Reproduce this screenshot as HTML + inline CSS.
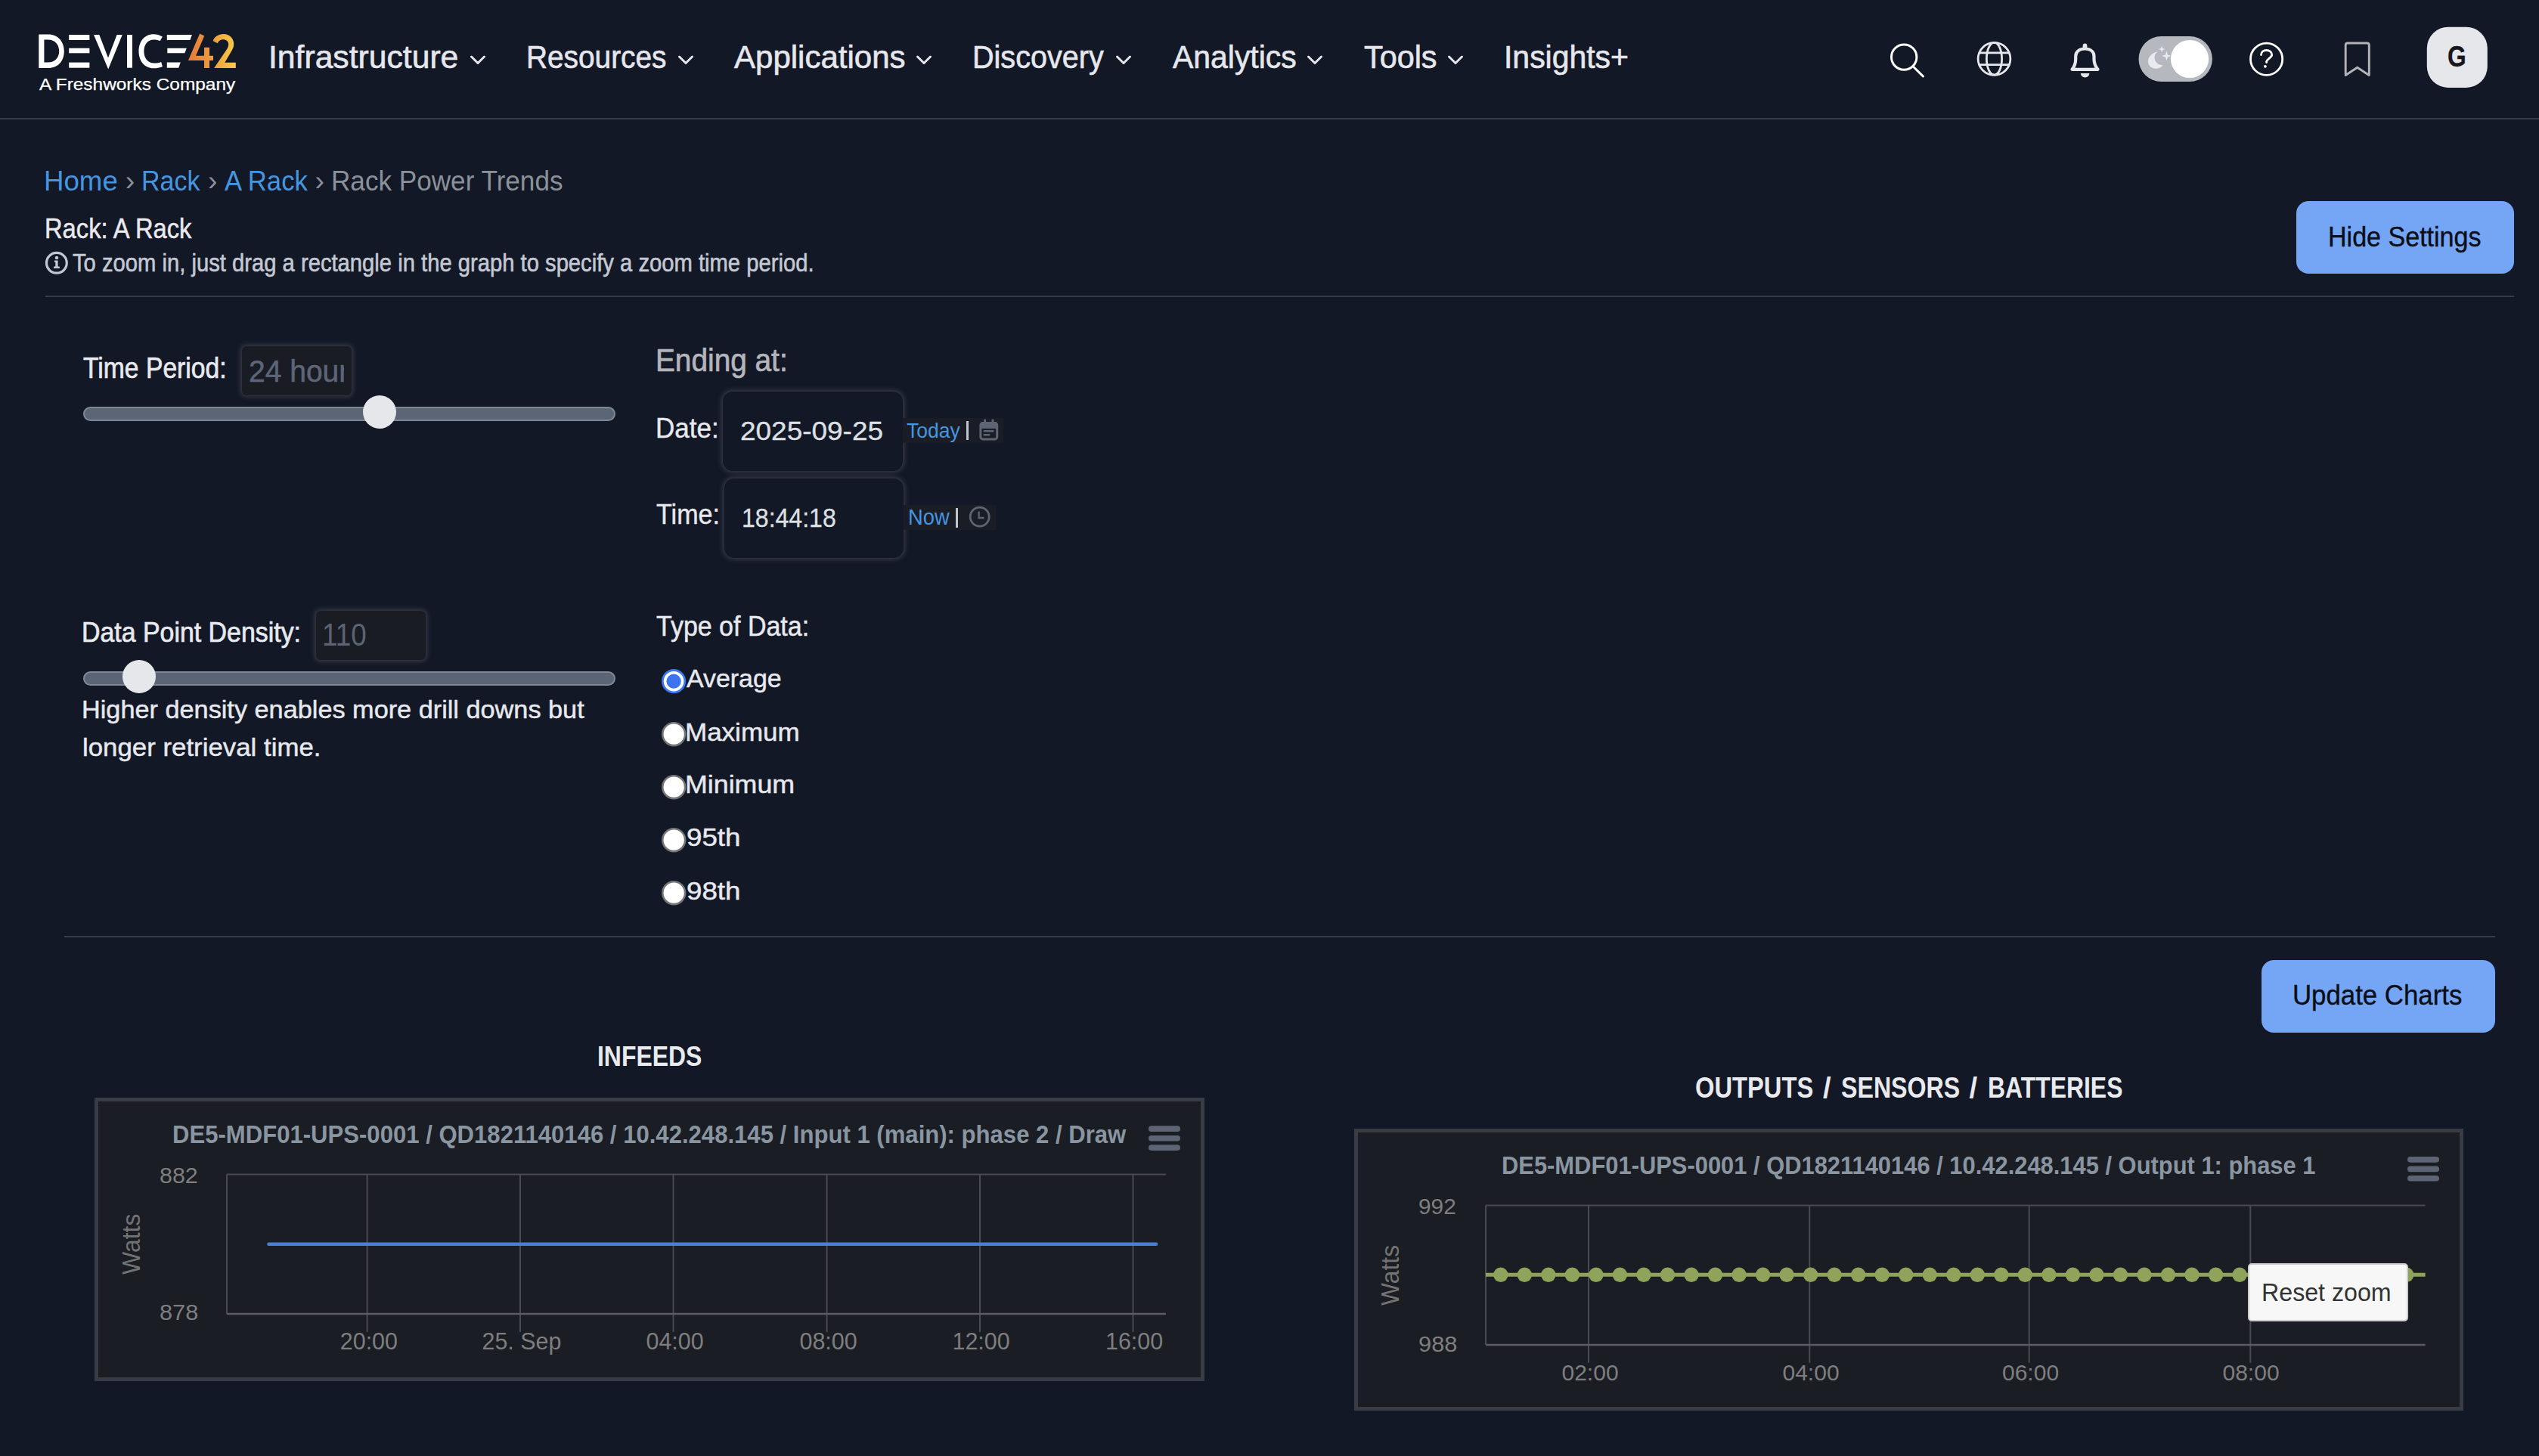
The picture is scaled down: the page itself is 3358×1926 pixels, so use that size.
<!DOCTYPE html>
<html><head><meta charset="utf-8"><title>Rack Power Trends</title>
<style>
html,body{margin:0;padding:0;}
body{width:3358px;height:1926px;overflow:hidden;background:#131826;position:relative;font-family:'Liberation Sans',sans-serif;}
.t{position:absolute;white-space:pre;transform-origin:0 0;}
.a{position:absolute;box-sizing:border-box;}
svg{position:absolute;overflow:visible;}
</style></head><body>

<div class=a style="left:0px;top:156px;width:3358px;height:2px;background:#393c48;"></div>
<svg style="left:0;top:0" width="340" height="140" viewBox="0 0 340 140">
<defs><linearGradient id="lg" x1="248" y1="0" x2="312" y2="0" gradientUnits="userSpaceOnUse">
<stop offset="0" stop-color="#e3783a"/><stop offset="0.5" stop-color="#ee9c3e"/><stop offset="1" stop-color="#f7cd45"/></linearGradient></defs>
<path fill="#fff" fill-rule="evenodd" d="M51.3,45.4 H63.5 C77.5,45.4 84.8,55.5 84.8,67.7 C84.8,80 77.5,90 63.5,90 H51.3 Z M58.4,52.5 V82.6 H63.5 C73,82.6 78.2,76 78.2,67.7 C78.2,59.3 73,52.5 63.5,52.5 Z"/>
<rect fill="#fff" x="91.2" y="46" width="27.2" height="7"/>
<rect fill="#fff" x="91.2" y="63.7" width="27.2" height="6.6"/>
<rect fill="#fff" x="91.2" y="82.6" width="27.2" height="7.1"/>
<path fill="#fff" d="M124,46 H131.3 L143,76.5 L154.6,46 H161.8 L143.2,91.5 Z"/>
<rect fill="#fff" x="168" y="46" width="7" height="43.7"/>
<path fill="#fff" d="M214.9,48.6 C211,46.3 207.5,45.2 203,45.2 C191,45.2 183.5,55 183.5,67.8 C183.5,80.5 191,90.3 203,90.3 C207.5,90.3 211.5,89.3 214.9,88.2 L213.2,82 C210.5,83 207.5,83.5 204,83.5 C195,83.5 190.4,76.5 190.4,67.8 C190.4,59 195,52.4 203.5,52.4 C206.5,52.4 209.5,53 211.8,54.1 Z"/>
<path fill="#fff" d="M220.8,46 H253.9 L251.4,53 H220.8 Z"/>
<path fill="#fff" d="M221.3,63.7 H246.8 L244.3,70.3 H221.3 Z"/>
<path fill="#fff" d="M220.8,82.6 H238.8 L236.2,89.7 H220.8 Z"/>
<path fill="url(#lg)" d="M264.2,44.5 L270.2,47.4 L259,73.7 H270 V62.7 H277 V73.7 H282 V79.9 H277 V90 H270 V79.9 H248.9 Z"/>
<path fill="url(#lg)" d="M281.6,54 C283.5,48.5 289,45 295.5,45 C303.5,45 309.2,50.5 309.2,58.3 C309.2,61.5 308.3,64 306.5,67 L297.3,82.8 H311.8 V90 H283.2 L299.8,65.5 C301.5,63 302.2,61 302.2,58.5 C302.2,54.5 299.2,52.2 295,52.2 C291.8,52.2 289.3,54 287.6,57.2 Z"/>
</svg>
<svg style="left:621.8px;top:72px" width="22" height="16"><polyline points="1.5,3 10,11.5 18.5,3" fill="none" stroke="#e6e7ec" stroke-width="3" stroke-linecap="round" stroke-linejoin="round"/></svg>
<svg style="left:896.5px;top:72px" width="22" height="16"><polyline points="1.5,3 10,11.5 18.5,3" fill="none" stroke="#e6e7ec" stroke-width="3" stroke-linecap="round" stroke-linejoin="round"/></svg>
<svg style="left:1212px;top:72px" width="22" height="16"><polyline points="1.5,3 10,11.5 18.5,3" fill="none" stroke="#e6e7ec" stroke-width="3" stroke-linecap="round" stroke-linejoin="round"/></svg>
<svg style="left:1476.3px;top:72px" width="22" height="16"><polyline points="1.5,3 10,11.5 18.5,3" fill="none" stroke="#e6e7ec" stroke-width="3" stroke-linecap="round" stroke-linejoin="round"/></svg>
<svg style="left:1728.8px;top:72px" width="22" height="16"><polyline points="1.5,3 10,11.5 18.5,3" fill="none" stroke="#e6e7ec" stroke-width="3" stroke-linecap="round" stroke-linejoin="round"/></svg>
<svg style="left:1915px;top:72px" width="22" height="16"><polyline points="1.5,3 10,11.5 18.5,3" fill="none" stroke="#e6e7ec" stroke-width="3" stroke-linecap="round" stroke-linejoin="round"/></svg>
<svg style="left:0;top:0" width="3358" height="140">
<circle cx="2518.2" cy="75.6" r="16.7" fill="none" stroke="#fff" stroke-width="3"/>
<line x1="2530.8" y1="88.5" x2="2543.5" y2="101" stroke="#fff" stroke-width="3" stroke-linecap="round"/>
<g fill="none" stroke="#e6e7eb" stroke-width="2.8">
<circle cx="2637.5" cy="77.8" r="21.4"/>
<ellipse cx="2637.5" cy="77.8" rx="10.1" ry="21.4"/>
<line x1="2617" y1="69.9" x2="2658" y2="69.9"/>
<line x1="2617" y1="85.6" x2="2658" y2="85.6"/>
</g>
<path fill="none" stroke="#e6e7eb" stroke-width="4.2" stroke-linejoin="round" d="M2740.5,91.8 C2744,87.5 2745.2,84 2745.2,78 V74.5 C2745.2,68.5 2750,64.5 2757.4,64.5 C2764.8,64.5 2769.5,68.5 2769.5,74.5 V78 C2769.5,84 2771,87.5 2774.5,91.8 Z"/>
<rect x="2754.6" y="57.6" width="5.8" height="6.5" rx="2.9" fill="#e6e7eb"/>
<path fill="#e6e7eb" d="M2751.8,97 H2763.4 C2763.4,100 2760.8,102.4 2757.6,102.4 C2754.4,102.4 2751.8,100 2751.8,97 Z"/>
<rect x="2828.5" y="48" width="97.4" height="60" rx="30" fill="#b5b8bf"/>
<circle cx="2896" cy="78" r="25.1" fill="#fff"/>
<path fill="#e9eaed" d="M2854,68.3 C2846,69.5 2841,75.5 2841,81.5 C2841,87 2845.5,90.8 2851.5,90.8 C2855.5,90.8 2858.5,89 2860.6,86.2 C2854,86.5 2849.5,81.5 2849.5,76 C2849.5,72.5 2851,70 2854,68.3 Z"/>
<path fill="#e9eaed" d="M2859.1,60.5 L2860.2,63.9 L2863.6,65 L2860.2,66.1 L2859.1,69.5 L2858,66.1 L2854.6,65 L2858,63.9 Z"/>
<path fill="#e9eaed" d="M2865.4,67.5 L2866.9,72.4 L2871.8,73.9 L2866.9,75.4 L2865.4,80.3 L2863.9,75.4 L2859,73.9 L2863.9,72.4 Z"/>
<circle cx="2997.6" cy="78.2" r="21.1" fill="none" stroke="#fff" stroke-width="2.8"/>
<path fill="none" stroke="#fff" stroke-width="2.8" stroke-linecap="round" d="M2990.5,72.5 C2990.5,68.5 2993.5,66.5 2997.5,66.5 C3001.5,66.5 3004.7,69 3004.7,72.5 C3004.7,76.5 2998.5,77.5 2997.6,81.5 V82.5"/>
<circle cx="2995.9" cy="87.8" r="1.9" fill="#fff"/>
<path fill="none" stroke="#b3b4b8" stroke-width="2.9" stroke-linejoin="round" d="M3102.2,99.5 V59.5 C3102.2,57.8 3103.5,57 3105,57 H3130.5 C3132,57 3133.3,57.8 3133.3,59.5 V99.5 L3117.7,89.2 Z"/>
<rect x="3209.8" y="35.7" width="80" height="80.3" rx="28" fill="#e6e7eb"/>
</svg>
<div class=a style="left:3037px;top:266px;width:288px;height:96px;background:#74a6f5;border-radius:16px;"></div>
<div class=a style="left:60px;top:391px;width:3265px;height:2px;background:#393c48;"></div>
<svg style="left:0;top:0" width="200" height="400">
<circle cx="74.9" cy="347.8" r="13.4" fill="none" stroke="#c3c8d2" stroke-width="3.2"/>
<circle cx="75" cy="341" r="2.3" fill="#c3c8d2"/>
<path fill="#c3c8d2" d="M72,344.5 H76.6 V352.5 H78.8 V355 H71 V352.5 H73.3 V347 H72 Z"/>
</svg>
<div class=a style="left:320px;top:458px;width:145px;height:65px;background:#1a1c24;border-radius:6px;box-shadow:0 0 6px 2px rgb(58,61,72);"></div>
<div class=a style="left:418px;top:808px;width:145px;height:65px;background:#1a1c24;border-radius:6px;box-shadow:0 0 6px 2px rgb(58,61,72);"></div>
<div class=a style="left:956px;top:518px;width:238px;height:105px;background:#131826;border-radius:13px;box-shadow:0 0 6px 2px rgb(58,61,72);"></div>
<div class=a style="left:958px;top:633px;width:237px;height:105px;background:#131826;border-radius:13px;box-shadow:0 0 6px 2px rgb(58,61,72);"></div>
<div class=a style="left:1194px;top:553px;width:133px;height:33px;background:#1a1d26;"></div>
<div class=a style="left:1195px;top:668px;width:122px;height:33px;background:#1a1d26;"></div>
<div class=a style="left:1278px;top:557px;width:3px;height:25px;background:#c0c4cc;"></div>
<div class=a style="left:1264.3px;top:672px;width:2.7000000000000455px;height:25.5px;background:#c0c4cc;"></div>
<svg style="left:0;top:0" width="1400" height="800">
<g fill="none" stroke="#5d6574" stroke-width="3">
<rect x="1296.9" y="559.5" width="21.8" height="21.4" rx="3"/>
<line x1="1302.5" y1="554.6" x2="1302.5" y2="560"/>
<line x1="1313" y1="554.6" x2="1313" y2="560"/>
<line x1="1298" y1="565.4" x2="1318" y2="565.4"/>
</g>
<rect x="1297" y="558" width="21.8" height="8" rx="2" fill="#5d6574"/>
<rect x="1300.5" y="569" width="14" height="2.4" rx="1.2" fill="#5d6574"/>
<rect x="1300.5" y="574" width="9" height="2.4" rx="1.2" fill="#5d6574"/>
<circle cx="1295.7" cy="683.6" r="12.5" fill="none" stroke="#5d6574" stroke-width="2.8"/>
<path d="M1294.6,676.5 V685 H1301.5" fill="none" stroke="#5d6574" stroke-width="2.3"/>
</svg>
<div class=a style="left:110px;top:537.7px;width:704px;height:19.199999999999932px;background:#5c6575;border:2px solid #7f8896;border-radius:10px;"></div>
<div class=a style="left:479.8px;top:522.6px;width:44px;height:44px;border-radius:50%;background:#e6e7eb;"></div>
<div class=a style="left:110px;top:887.5px;width:704px;height:19.200000000000045px;background:#5c6575;border:2px solid #7f8896;border-radius:10px;"></div>
<div class=a style="left:161.8px;top:872.6px;width:44px;height:44px;border-radius:50%;background:#e6e7eb;"></div>
<svg style="left:0;top:0" width="1000" height="1250">
<circle cx="891.1" cy="901.2" r="14.7" fill="#fff" stroke="#3a78f2" stroke-width="2.8"/>
<circle cx="891.1" cy="901.2" r="9.6" fill="#3b74ee"/>
<circle cx="891.2" cy="971.2" r="14.9" fill="#fff" stroke="#767676" stroke-width="2.6"/>
<circle cx="891.2" cy="1041.2" r="14.9" fill="#fff" stroke="#767676" stroke-width="2.6"/>
<circle cx="891.2" cy="1111.2" r="14.9" fill="#fff" stroke="#767676" stroke-width="2.6"/>
<circle cx="891.2" cy="1181.2" r="14.9" fill="#fff" stroke="#767676" stroke-width="2.6"/>
</svg>
<div class=a style="left:85px;top:1238px;width:3215px;height:2px;background:#393c48;"></div>
<div class=a style="left:2991px;top:1270px;width:309px;height:96px;background:#74a6f5;border-radius:16px;"></div>
<div class=a style="left:124.5px;top:1452px;width:1468.0px;height:375.29999999999995px;background:#1b1d24;border:3px solid #383b48;"></div>
<div class=a style="left:127.5px;top:1455px;width:1462.0px;height:369.29999999999995px;border:2px solid #3c3c40;"></div>
<svg style="left:0;top:0" width="3358" height="1926"><g stroke="#4a4b50" stroke-width="2" fill="none"><line x1="300" y1="1553.4" x2="1542" y2="1553.4"/><line x1="300" y1="1553.4" x2="300" y2="1738"/><line x1="485.6" y1="1553.4" x2="485.6" y2="1762"/><line x1="688" y1="1553.4" x2="688" y2="1762"/><line x1="890.5" y1="1553.4" x2="890.5" y2="1762"/><line x1="1093.6" y1="1553.4" x2="1093.6" y2="1762"/><line x1="1296" y1="1553.4" x2="1296" y2="1762"/><line x1="1498.5" y1="1553.4" x2="1498.5" y2="1762"/></g><line x1="300" y1="1738" x2="1542" y2="1738" stroke="#5b5c61" stroke-width="2.5"/><rect x="1519" y="1489.3" width="42" height="7.7" rx="3.85" fill="#5d6575"/><rect x="1519" y="1501.8999999999999" width="42" height="7.7" rx="3.85" fill="#5d6575"/><rect x="1519" y="1514.2" width="42" height="7.7" rx="3.85" fill="#5d6575"/>
<line x1="355.5" y1="1645.8" x2="1529" y2="1645.8" stroke="#4a7fd8" stroke-width="4.6" stroke-linecap="round"/></svg>
<div class=a style="left:1790.6px;top:1492.7px;width:1467.1px;height:373.79999999999995px;background:#1b1d24;border:3px solid #383b48;"></div>
<div class=a style="left:1793.6px;top:1495.7px;width:1461.1px;height:367.79999999999995px;border:2px solid #3c3c40;"></div>
<svg style="left:0;top:0" width="3358" height="1926"><g stroke="#4a4b50" stroke-width="2" fill="none"><line x1="1965" y1="1594.4" x2="3207.6" y2="1594.4"/><line x1="1965" y1="1594.4" x2="1965" y2="1779"/><line x1="2101" y1="1594.4" x2="2101" y2="1802.7"/><line x1="2393.3" y1="1594.4" x2="2393.3" y2="1802.7"/><line x1="2683.7" y1="1594.4" x2="2683.7" y2="1802.7"/><line x1="2976.3" y1="1594.4" x2="2976.3" y2="1802.7"/></g><line x1="1965" y1="1779" x2="3207.6" y2="1779" stroke="#5b5c61" stroke-width="2.5"/><rect x="3184" y="1530" width="42" height="7.7" rx="3.85" fill="#5d6575"/><rect x="3184" y="1542.6" width="42" height="7.7" rx="3.85" fill="#5d6575"/><rect x="3184" y="1554.9" width="42" height="7.7" rx="3.85" fill="#5d6575"/>
<line x1="1965" y1="1686.3" x2="3207.6" y2="1686.3" stroke="#8fa45a" stroke-width="5"/><circle cx="1984.80" cy="1686.3" r="9.7" fill="#8fa45a"/><circle cx="2016.33" cy="1686.3" r="9.7" fill="#8fa45a"/><circle cx="2047.85" cy="1686.3" r="9.7" fill="#8fa45a"/><circle cx="2079.38" cy="1686.3" r="9.7" fill="#8fa45a"/><circle cx="2110.90" cy="1686.3" r="9.7" fill="#8fa45a"/><circle cx="2142.43" cy="1686.3" r="9.7" fill="#8fa45a"/><circle cx="2173.95" cy="1686.3" r="9.7" fill="#8fa45a"/><circle cx="2205.47" cy="1686.3" r="9.7" fill="#8fa45a"/><circle cx="2237.00" cy="1686.3" r="9.7" fill="#8fa45a"/><circle cx="2268.53" cy="1686.3" r="9.7" fill="#8fa45a"/><circle cx="2300.05" cy="1686.3" r="9.7" fill="#8fa45a"/><circle cx="2331.57" cy="1686.3" r="9.7" fill="#8fa45a"/><circle cx="2363.10" cy="1686.3" r="9.7" fill="#8fa45a"/><circle cx="2394.62" cy="1686.3" r="9.7" fill="#8fa45a"/><circle cx="2426.15" cy="1686.3" r="9.7" fill="#8fa45a"/><circle cx="2457.68" cy="1686.3" r="9.7" fill="#8fa45a"/><circle cx="2489.20" cy="1686.3" r="9.7" fill="#8fa45a"/><circle cx="2520.72" cy="1686.3" r="9.7" fill="#8fa45a"/><circle cx="2552.25" cy="1686.3" r="9.7" fill="#8fa45a"/><circle cx="2583.78" cy="1686.3" r="9.7" fill="#8fa45a"/><circle cx="2615.30" cy="1686.3" r="9.7" fill="#8fa45a"/><circle cx="2646.82" cy="1686.3" r="9.7" fill="#8fa45a"/><circle cx="2678.35" cy="1686.3" r="9.7" fill="#8fa45a"/><circle cx="2709.88" cy="1686.3" r="9.7" fill="#8fa45a"/><circle cx="2741.40" cy="1686.3" r="9.7" fill="#8fa45a"/><circle cx="2772.93" cy="1686.3" r="9.7" fill="#8fa45a"/><circle cx="2804.45" cy="1686.3" r="9.7" fill="#8fa45a"/><circle cx="2835.97" cy="1686.3" r="9.7" fill="#8fa45a"/><circle cx="2867.50" cy="1686.3" r="9.7" fill="#8fa45a"/><circle cx="2899.02" cy="1686.3" r="9.7" fill="#8fa45a"/><circle cx="2930.55" cy="1686.3" r="9.7" fill="#8fa45a"/><circle cx="2962.07" cy="1686.3" r="9.7" fill="#8fa45a"/><circle cx="2993.60" cy="1686.3" r="9.7" fill="#8fa45a"/><circle cx="3025.12" cy="1686.3" r="9.7" fill="#8fa45a"/><circle cx="3056.65" cy="1686.3" r="9.7" fill="#8fa45a"/><circle cx="3088.18" cy="1686.3" r="9.7" fill="#8fa45a"/><circle cx="3119.70" cy="1686.3" r="9.7" fill="#8fa45a"/><circle cx="3151.22" cy="1686.3" r="9.7" fill="#8fa45a"/><circle cx="3182.75" cy="1686.3" r="9.7" fill="#8fa45a"/></svg>
<div class=a style="left:2972.6px;top:1670.5px;width:212.4000000000001px;height:77.20000000000005px;background:#f7f7f7;border:2px solid #cccccc;border-radius:5px;"></div>
<div class=t style="left:157.91px;top:1686.25px;font-size:32.3px;line-height:32.3px;color:#737373;transform:rotate(-90deg) scaleX(0.9881);transform-origin:0 0">Watts</div>
<div class=t style="left:1822.91px;top:1727.10px;font-size:32.3px;line-height:32.3px;color:#737373;transform:rotate(-90deg) scaleX(0.9837);transform-origin:0 0">Watts</div>
<div class=t style="left:355.44px;top:55.48px;font-size:42.03px;line-height:42.03px;color:#e6e7ec;font-weight:400;transform:scaleX(1.0153);-webkit-text-stroke:0.6px #e6e7ec;">Infrastructure</div>
<div class=t style="left:696.23px;top:55.48px;font-size:42.03px;line-height:42.03px;color:#e6e7ec;font-weight:400;transform:scaleX(0.9235);-webkit-text-stroke:0.6px #e6e7ec;">Resources</div>
<div class=t style="left:971.00px;top:55.48px;font-size:42.03px;line-height:42.03px;color:#e6e7ec;font-weight:400;-webkit-text-stroke:0.6px #e6e7ec;">Applications</div>
<div class=t style="left:1286.17px;top:55.48px;font-size:42.03px;line-height:42.03px;color:#e6e7ec;font-weight:400;transform:scaleX(0.9418);-webkit-text-stroke:0.6px #e6e7ec;">Discovery</div>
<div class=t style="left:1550.80px;top:55.48px;font-size:42.03px;line-height:42.03px;color:#e6e7ec;font-weight:400;transform:scaleX(0.9737);-webkit-text-stroke:0.6px #e6e7ec;">Analytics</div>
<div class=t style="left:1803.52px;top:55.48px;font-size:42.03px;line-height:42.03px;color:#e6e7ec;font-weight:400;transform:scaleX(0.9844);-webkit-text-stroke:0.6px #e6e7ec;">Tools</div>
<div class=t style="left:1988.50px;top:55.48px;font-size:42.03px;line-height:42.03px;color:#e6e7ec;font-weight:400;transform:scaleX(0.9742);-webkit-text-stroke:0.6px #e6e7ec;">Insights+</div>
<div class=t style="left:3237.19px;top:54.75px;font-size:38.99px;line-height:38.99px;color:#16181d;font-weight:700;transform:scaleX(0.8148);-webkit-text-stroke:0.3px #16181d;">G</div>
<div class=t style="left:58.35px;top:220.72px;font-size:37.25px;line-height:37.25px;color:#4596e0;font-weight:400;transform:scaleX(0.9842);">Home</div>
<div class=t style="left:165.80px;top:220.77px;font-size:37.2px;line-height:37.2px;color:#8a9199;font-weight:400;">›</div>
<div class=t style="left:187.46px;top:220.72px;font-size:37.25px;line-height:37.25px;color:#4596e0;font-weight:400;transform:scaleX(0.9122);">Rack</div>
<div class=t style="left:274.90px;top:220.77px;font-size:37.2px;line-height:37.2px;color:#8a9199;font-weight:400;">›</div>
<div class=t style="left:297.00px;top:220.72px;font-size:37.25px;line-height:37.25px;color:#4596e0;font-weight:400;transform:scaleX(0.9305);">A Rack</div>
<div class=t style="left:416.60px;top:220.77px;font-size:37.2px;line-height:37.2px;color:#8a9199;font-weight:400;">›</div>
<div class=t style="left:437.97px;top:220.72px;font-size:37.25px;line-height:37.25px;color:#8a9199;font-weight:400;transform:scaleX(0.9430);">Rack Power Trends</div>
<div class=t style="left:58.66px;top:283.85px;font-size:37.1px;line-height:37.1px;color:#e9e9ee;font-weight:400;transform:scaleX(0.8817);-webkit-text-stroke:0.5px #e9e9ee;">Rack: A Rack</div>
<div class=t style="left:95.50px;top:331.94px;font-size:32.61px;line-height:32.61px;color:#c3c8d2;font-weight:400;transform:scaleX(0.8956);-webkit-text-stroke:0.6px #c3c8d2;">To zoom in, just drag a rectangle in the graph to specify a zoom time period.</div>
<div class=t style="left:3079.27px;top:294.61px;font-size:37.39px;line-height:37.39px;color:#0b0e16;font-weight:400;transform:scaleX(0.9110);-webkit-text-stroke:0.4px #0b0e16;">Hide Settings</div>
<div class=t style="left:109.84px;top:466.94px;font-size:39.13px;line-height:39.13px;color:#e8e9ee;font-weight:400;transform:scaleX(0.8606);-webkit-text-stroke:0.7px #e8e9ee;">Time Period:</div>
<div class=a style="left:319.6px;top:457.6px;width:135.39999999999998px;height:65.19999999999993px;overflow:hidden"><div style="position:absolute;left:-319.6px;top:-457.6px;"><div class=t style="left:329.02px;top:470.13px;font-size:41.5px;line-height:41.5px;color:#5d6678;font-weight:400;transform:scaleX(0.9400);-webkit-text-stroke:0.5px #5d6678;">24 hour</div></div></div>
<div class=t style="left:866.59px;top:454.75px;font-size:42.9px;line-height:42.9px;color:#b3b5bb;font-weight:400;transform:scaleX(0.9043);-webkit-text-stroke:0.7px #b3b5bb;">Ending at:</div>
<div class=t style="left:866.51px;top:547.66px;font-size:37.68px;line-height:37.68px;color:#e8e9ee;font-weight:400;transform:scaleX(0.9298);-webkit-text-stroke:0.4px #e8e9ee;">Date:</div>
<div class=t style="left:979.33px;top:553.08px;font-size:35.65px;line-height:35.65px;color:#dfe0e4;font-weight:400;transform:scaleX(1.0369);-webkit-text-stroke:0.3px #dfe0e4;">2025-09-25</div>
<div class=t style="left:1199.00px;top:554.79px;font-size:28.41px;line-height:28.41px;color:#4596e0;font-weight:400;transform:scaleX(0.9342);">Today</div>
<div class=t style="left:867.77px;top:662.84px;font-size:36.52px;line-height:36.52px;color:#e8e9ee;font-weight:400;transform:scaleX(0.9337);-webkit-text-stroke:0.4px #e8e9ee;">Time:</div>
<div class=t style="left:980.92px;top:667.33px;font-size:35.94px;line-height:35.94px;color:#dfe0e4;font-weight:400;transform:scaleX(0.8919);-webkit-text-stroke:0.3px #dfe0e4;">18:44:18</div>
<div class=t style="left:1200.60px;top:669.85px;font-size:28.7px;line-height:28.7px;color:#4596e0;font-weight:400;transform:scaleX(0.9518);">Now</div>
<div class=t style="left:108.00px;top:818.16px;font-size:37.68px;line-height:37.68px;color:#e8e9ee;font-weight:400;transform:scaleX(0.8994);-webkit-text-stroke:0.7px #e8e9ee;">Data Point Density:</div>
<div class=t style="left:426.07px;top:819.48px;font-size:42.03px;line-height:42.03px;color:#5c6473;font-weight:400;transform:scaleX(0.8758);">110</div>
<div class=t style="left:107.62px;top:922.34px;font-size:33.33px;line-height:33.33px;color:#e8e9ee;font-weight:400;transform:scaleX(1.0281);-webkit-text-stroke:0.45px #e8e9ee;">Higher density enables more drill downs but</div>
<div class=t style="left:108.61px;top:971.54px;font-size:33.33px;line-height:33.33px;color:#e8e9ee;font-weight:400;transform:scaleX(1.0448);-webkit-text-stroke:0.45px #e8e9ee;">longer retrieval time.</div>
<div class=t style="left:867.79px;top:809.58px;font-size:37.54px;line-height:37.54px;color:#e8e9ee;font-weight:400;transform:scaleX(0.9055);-webkit-text-stroke:0.5px #e8e9ee;">Type of Data:</div>
<div class=t style="left:907.70px;top:881.41px;font-size:33.48px;line-height:33.48px;color:#e8e9ee;font-weight:400;transform:scaleX(1.0130);-webkit-text-stroke:0.45px #e8e9ee;">Average</div>
<div class=t style="left:905.86px;top:951.51px;font-size:33.48px;line-height:33.48px;color:#e8e9ee;font-weight:400;transform:scaleX(1.0457);-webkit-text-stroke:0.45px #e8e9ee;">Maximum</div>
<div class=t style="left:905.79px;top:1021.31px;font-size:33.48px;line-height:33.48px;color:#e8e9ee;font-weight:400;transform:scaleX(1.0687);-webkit-text-stroke:0.45px #e8e9ee;">Minimum</div>
<div class=t style="left:907.90px;top:1091.41px;font-size:33.48px;line-height:33.48px;color:#e8e9ee;font-weight:400;transform:scaleX(1.0968);-webkit-text-stroke:0.45px #e8e9ee;">95th</div>
<div class=t style="left:907.90px;top:1161.71px;font-size:33.48px;line-height:33.48px;color:#e8e9ee;font-weight:400;transform:scaleX(1.0968);-webkit-text-stroke:0.45px #e8e9ee;">98th</div>
<div class=t style="left:3032.23px;top:1298.16px;font-size:37.68px;line-height:37.68px;color:#0b0e16;font-weight:400;transform:scaleX(0.9234);-webkit-text-stroke:0.4px #0b0e16;">Update Charts</div>
<div class=t style="left:790.26px;top:1380.01px;font-size:36.67px;line-height:36.67px;color:#e9eaee;font-weight:700;transform:scaleX(0.8705);">INFEEDS</div>
<div class=t style="left:2241.55px;top:1420.47px;font-size:38.26px;line-height:38.26px;color:#e9eaee;font-weight:700;transform:scaleX(0.8550);">OUTPUTS</div>
<div class=t style="left:2411.00px;top:1420.47px;font-size:38.26px;line-height:38.26px;color:#e9eaee;font-weight:700;">/</div>
<div class=t style="left:2435.26px;top:1420.47px;font-size:38.26px;line-height:38.26px;color:#e9eaee;font-weight:700;transform:scaleX(0.8405);">SENSORS</div>
<div class=t style="left:2604.60px;top:1420.47px;font-size:38.26px;line-height:38.26px;color:#e9eaee;font-weight:700;">/</div>
<div class=t style="left:2629.33px;top:1420.47px;font-size:38.26px;line-height:38.26px;color:#e9eaee;font-weight:700;transform:scaleX(0.8341);">BATTERIES</div>
<div class=t style="left:228.39px;top:1484.54px;font-size:32.5px;line-height:32.5px;color:#8995a0;font-weight:700;transform:scaleX(0.9565);">DE5-MDF01-UPS-0001 / QD1821140146 / 10.42.248.145 / Input 1 (main): phase 2 / Draw</div>
<div class=t style="left:1986.40px;top:1525.84px;font-size:32.5px;line-height:32.5px;color:#8995a0;font-weight:700;transform:scaleX(0.9504);">DE5-MDF01-UPS-0001 / QD1821140146 / 10.42.248.145 / Output 1: phase 1</div>
<div class=t style="left:210.85px;top:1540.70px;font-size:28.99px;line-height:28.99px;color:#7e7e7e;font-weight:400;transform:scaleX(1.0500);">882</div>
<div class=t style="left:210.84px;top:1722.39px;font-size:29.13px;line-height:29.13px;color:#7e7e7e;font-weight:400;transform:scaleX(1.0553);">878</div>
<div class=t style="left:1875.91px;top:1581.15px;font-size:30.0px;line-height:30.0px;color:#7e7e7e;font-weight:400;transform:scaleX(0.9937);">992</div>
<div class=t style="left:1875.88px;top:1762.83px;font-size:30.14px;line-height:30.14px;color:#7e7e7e;font-weight:400;transform:scaleX(1.0229);">988</div>
<div class=t style="left:449.80px;top:1759.29px;font-size:30.43px;line-height:30.43px;color:#7e7e7e;font-weight:400;">20:00</div>
<div class=t style="left:637.50px;top:1759.29px;font-size:30.43px;line-height:30.43px;color:#7e7e7e;font-weight:400;">25. Sep</div>
<div class=t style="left:854.50px;top:1759.29px;font-size:30.43px;line-height:30.43px;color:#7e7e7e;font-weight:400;">04:00</div>
<div class=t style="left:1057.50px;top:1759.29px;font-size:30.43px;line-height:30.43px;color:#7e7e7e;font-weight:400;">08:00</div>
<div class=t style="left:1259.50px;top:1759.29px;font-size:30.43px;line-height:30.43px;color:#7e7e7e;font-weight:400;">12:00</div>
<div class=t style="left:1462.00px;top:1759.29px;font-size:30.43px;line-height:30.43px;color:#7e7e7e;font-weight:400;">16:00</div>
<div class=t style="left:2065.50px;top:1800.95px;font-size:30.0px;line-height:30.0px;color:#7e7e7e;font-weight:400;">02:00</div>
<div class=t style="left:2357.50px;top:1800.95px;font-size:30.0px;line-height:30.0px;color:#7e7e7e;font-weight:400;">04:00</div>
<div class=t style="left:2648.00px;top:1800.95px;font-size:30.0px;line-height:30.0px;color:#7e7e7e;font-weight:400;">06:00</div>
<div class=t style="left:2939.50px;top:1800.95px;font-size:30.0px;line-height:30.0px;color:#7e7e7e;font-weight:400;">08:00</div>
<div class=t style="left:2991.25px;top:1693.53px;font-size:32.75px;line-height:32.75px;color:#333333;font-weight:400;transform:scaleX(0.9824);">Reset zoom</div>
<div class=t style="left:51.90px;top:99.78px;font-size:22.75px;line-height:22.75px;color:#ffffff;font-weight:400;transform:scaleX(1.0734);-webkit-text-stroke:0.25px #ffffff;">A Freshworks Company</div>
</body></html>
